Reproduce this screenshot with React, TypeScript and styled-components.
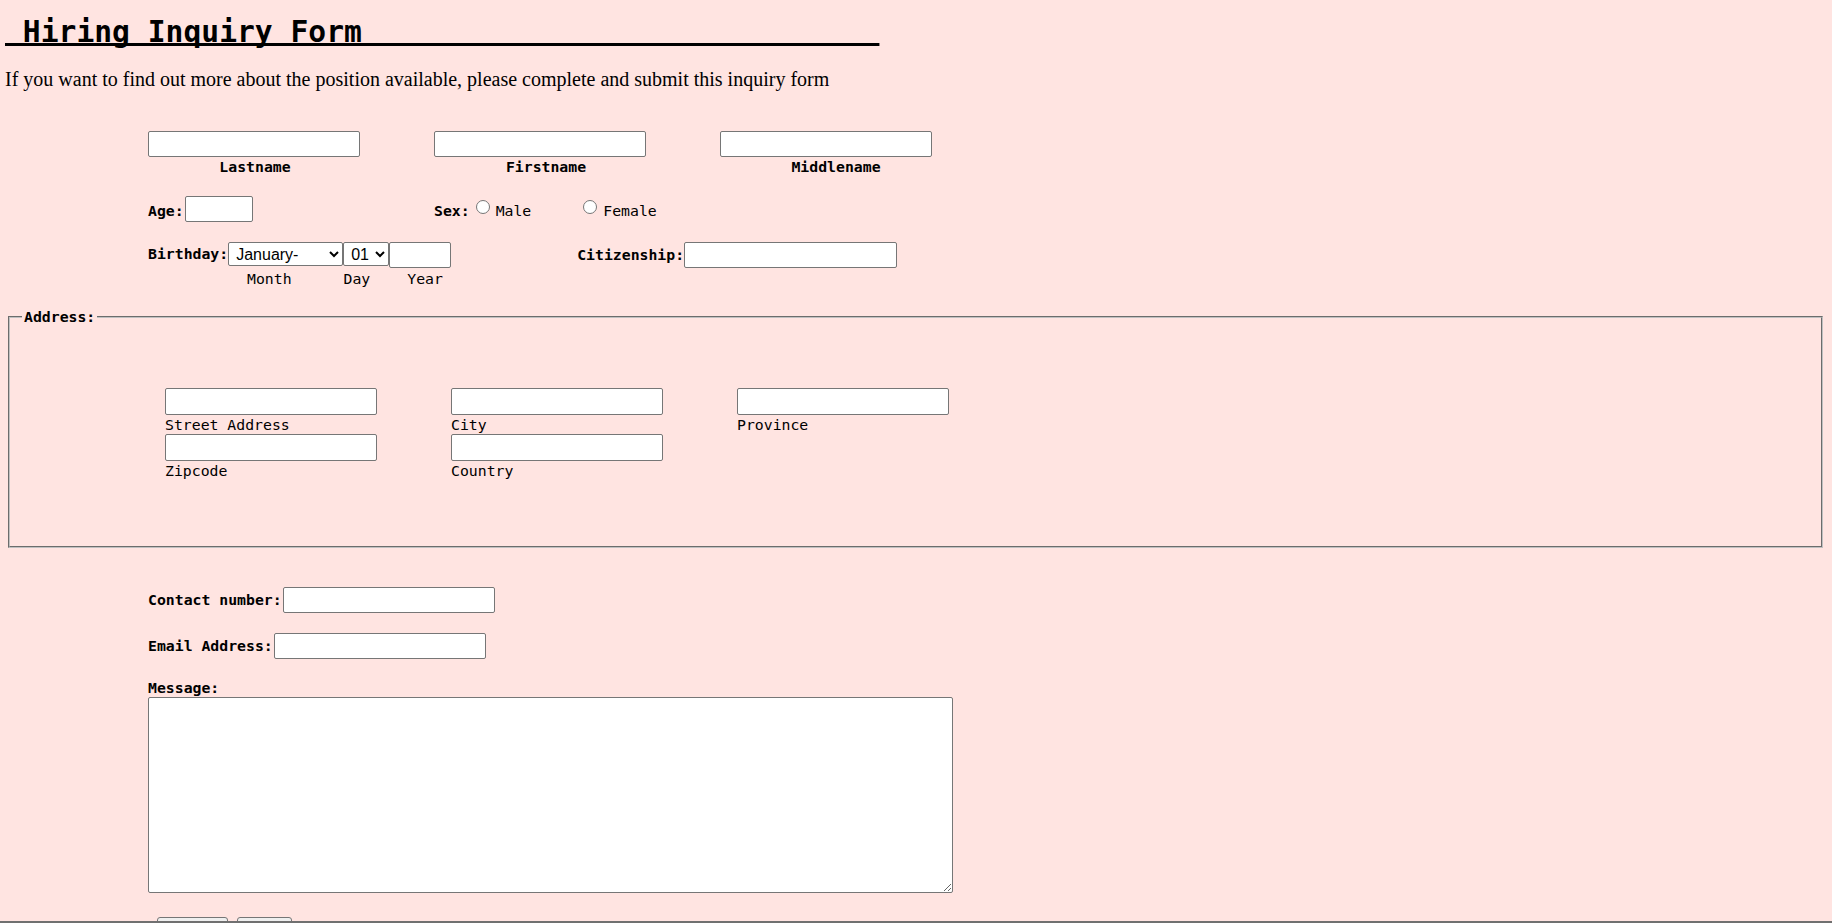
import React from 'react';
import styled, { createGlobalStyle } from 'styled-components';

const mono = `"DejaVu Sans Mono", "Liberation Mono", monospace`;
const sans = `"Liberation Sans", Arial, sans-serif`;

const GlobalStyle = createGlobalStyle`
  html, body { margin: 0; padding: 0; background: #ffe4e1; }
  body { font-family: "Liberation Serif", "Times New Roman", serif; color: #000; }
  * { box-sizing: border-box; }
`;

const Page = styled.div`
  padding: 0 5px;
`;

const Title = styled.h1`
  margin: 0;
  padding-top: 15px;
  font-family: ${mono};
  font-size: 29.65px;
  font-weight: bold;
  line-height: 34px;
  white-space: pre;
  text-decoration: underline;
  text-decoration-thickness: 3px;
  text-underline-offset: 1px;
  text-decoration-skip-ink: none;
`;

const Intro = styled.p`
  margin: 19px 0 0;
  font-size: 20px;
  line-height: 23px;
`;

const Indent = styled.div`
  margin-left: 143px;
`;

const NameRow = styled.div`
  margin-top: 40px;
  display: grid;
  grid-template-columns: repeat(3, 212px);
  column-gap: 74px;
`;

const NameField = styled.div`
  display: flex;
  flex-direction: column;
  align-items: center;
`;

const TextBox = styled.input<{ $w: number; $h?: number }>`
  width: ${(p) => p.$w}px;
  height: ${(p) => p.$h ?? 26}px;
  margin: 0;
  padding: 1px 3px;
  border: 1px solid #767676;
  border-radius: 2px;
  background: #fff;
  font: 13.33px ${sans};
`;

const BoldCaption = styled.label<{ $shift: number }>`
  margin-top: 1px;
  padding-left: ${(p) => p.$shift}px;
  font-family: ${mono};
  font-weight: bold;
  font-size: 14.8px;
  line-height: 18px;
`;

const BoldLabel = styled.label<{ $lh?: number; $pt?: number }>`
  padding-top: ${(p) => p.$pt ?? 0}px;
  font-family: ${mono};
  font-weight: bold;
  font-size: 14.8px;
  line-height: ${(p) => p.$lh ?? 18}px;
  white-space: pre;
`;

const PlainText = styled.span<{ $pt?: number }>`
  padding-top: ${(p) => p.$pt ?? 0}px;
  font-family: ${mono};
  font-size: 14.8px;
  line-height: 18px;
  white-space: pre;
`;

const PersonalRow = styled.div`
  margin-top: 20px;
  display: grid;
  grid-template-columns: 286px auto;
  align-items: center;
`;

const Inline = styled.div<{ $top?: number; $ml?: number }>`
  display: flex;
  align-items: center;
  margin-top: ${(p) => p.$top ?? 0}px;
  margin-left: ${(p) => p.$ml ?? 0}px;
`;

const Gap = styled.span<{ $w: number }>`
  display: inline-block;
  width: ${(p) => p.$w}px;
`;

const Radio = styled.input.attrs({ type: 'radio' })<{ $ml: number }>`
  appearance: none;
  align-self: flex-start;
  width: 14px;
  height: 14px;
  margin: 2px 6px 0 ${(p) => p.$ml}px;
  border: 1px solid #767676;
  border-radius: 50%;
  background: #fff;
`;

const BirthRow = styled.div`
  margin-top: 20px;
  display: flex;
  align-items: flex-start;
`;

const Select = styled.select<{ $w: number }>`
  width: ${(p) => p.$w}px;
  height: 24px;
  margin: 0;
  padding: 0 0 0 3px;
  border: 1px solid #767676;
  border-radius: 2px;
  background: #fff;
  color: #000;
  font: 16px ${sans};
`;

const SubLabels = styled.div`
  margin-top: 2px;
  display: flex;
`;

const SubLabel = styled.span<{ $ml: number }>`
  margin-left: ${(p) => p.$ml}px;
  font-family: ${mono};
  font-size: 14.8px;
  line-height: 18px;
`;

const AddressSet = styled.fieldset`
  margin: 20px 4px 0 3px;
  padding: 0 11px 0 12px;
  min-width: 0;
  border: 2px groove rgb(192, 192, 192);
`;

const Legend = styled.legend`
  padding: 0 2px;
  font-family: ${mono};
  font-weight: bold;
  font-size: 14.8px;
  line-height: 18px;
`;

const AddressGrid = styled.div`
  margin-left: 143px;
  padding: 62px 0 66px;
  display: grid;
  grid-template-columns: repeat(3, 212px);
  column-gap: 74px;
`;

const AddressField = styled.div`
  display: flex;
  flex-direction: column;
  align-items: flex-start;
`;

const Caption = styled.label`
  padding-top: 1px;
  font-family: ${mono};
  font-size: 14.8px;
  line-height: 18px;
`;

const MessageLabel = styled.label`
  display: block;
  margin-top: 20px;
  font-family: ${mono};
  font-weight: bold;
  font-size: 14.8px;
  line-height: 18px;
`;

const MessageBox = styled.textarea`
  display: block;
  width: 805px;
  height: 196px;
  margin: 0;
  padding: 2px;
  border: 1px solid #767676;
  border-radius: 2px;
  background: #fff;
  font: 13.33px ${mono};
`;

const ButtonRow = styled.div`
  margin-top: 24px;
  padding-left: 9px;
  display: flex;
  gap: 9px;
`;

const Button = styled.button<{ $w: number }>`
  width: ${(p) => p.$w}px;
  height: 27px;
  margin: 0;
  border: 1px solid #767676;
  border-radius: 3px;
  background: #efefef;
  font: 13.33px ${sans};
  color: #000;
`;

const BottomEdge = styled.div`
  position: fixed;
  left: 0;
  right: 0;
  bottom: 0;
  height: 2px;
  background: #707070;
`;

const months = [
  'January-', 'February', 'March', 'April', 'May', 'June',
  'July', 'August', 'September', 'October', 'November', 'December',
];
const days = Array.from({ length: 31 }, (_, i) => String(i + 1).padStart(2, '0'));

export default function App() {
  const title = '\u00A0Hiring Inquiry Form' + '\u00A0'.repeat(29);
  return (
    <Page>
      <GlobalStyle />
      <Title>{title}</Title>
      <Intro>
        If you want to find out more about the position available, please complete and submit this inquiry form
      </Intro>

      <Indent>
        <NameRow>
          <NameField>
            <TextBox $w={212} type="text" />
            <BoldCaption $shift={2}>Lastname</BoldCaption>
          </NameField>
          <NameField>
            <TextBox $w={212} type="text" />
            <BoldCaption $shift={12}>Firstname</BoldCaption>
          </NameField>
          <NameField>
            <TextBox $w={212} type="text" />
            <BoldCaption $shift={20}>Middlename</BoldCaption>
          </NameField>
        </NameRow>

        <PersonalRow>
          <Inline>
            <BoldLabel $pt={4}>Age:</BoldLabel>
            <Gap $w={1} />
            <TextBox $w={68} type="text" />
          </Inline>
          <Inline>
            <BoldLabel $pt={4}>Sex:</BoldLabel>
            <Radio name="sex" $ml={6} />
            <PlainText $pt={4}>Male</PlainText>
            <Radio name="sex" $ml={52} />
            <PlainText $pt={4}>Female</PlainText>
          </Inline>
        </PersonalRow>

        <BirthRow>
          <BoldLabel $lh={24}>Birthday:</BoldLabel>
          <Select $w={115} defaultValue="January-">
            {months.map((m) => (
              <option key={m}>{m}</option>
            ))}
          </Select>
          <Select $w={46} defaultValue="01">
            {days.map((d) => (
              <option key={d}>{d}</option>
            ))}
          </Select>
          <TextBox $w={62} type="text" />
          <Inline $ml={126}>
            <BoldLabel $lh={26}>Citizenship:</BoldLabel>
            <TextBox $w={213} type="text" />
          </Inline>
        </BirthRow>
        <SubLabels>
          <SubLabel $ml={99}>Month</SubLabel>
          <SubLabel $ml={52}>Day</SubLabel>
          <SubLabel $ml={37}>Year</SubLabel>
        </SubLabels>
      </Indent>

      <AddressSet>
        <Legend>Address:</Legend>
        <AddressGrid>
          <AddressField>
            <TextBox $w={212} $h={27} type="text" />
            <Caption>Street Address</Caption>
          </AddressField>
          <AddressField>
            <TextBox $w={212} $h={27} type="text" />
            <Caption>City</Caption>
          </AddressField>
          <AddressField>
            <TextBox $w={212} $h={27} type="text" />
            <Caption>Province</Caption>
          </AddressField>
          <AddressField>
            <TextBox $w={212} $h={27} type="text" />
            <Caption>Zipcode</Caption>
          </AddressField>
          <AddressField>
            <TextBox $w={212} $h={27} type="text" />
            <Caption>Country</Caption>
          </AddressField>
        </AddressGrid>
      </AddressSet>

      <Indent>
        <Inline $top={39}>
          <BoldLabel>Contact number:</BoldLabel>
          <Gap $w={1} />
          <TextBox $w={212} type="text" />
        </Inline>
        <Inline $top={20}>
          <BoldLabel>Email Address:</BoldLabel>
          <Gap $w={1} />
          <TextBox $w={212} type="text" />
        </Inline>
        <MessageLabel>Message:</MessageLabel>
        <MessageBox />
        <ButtonRow>
          <Button $w={71} type="submit">Submit</Button>
          <Button $w={55} type="reset">Reset</Button>
        </ButtonRow>
      </Indent>
      <BottomEdge />
    </Page>
  );
}
